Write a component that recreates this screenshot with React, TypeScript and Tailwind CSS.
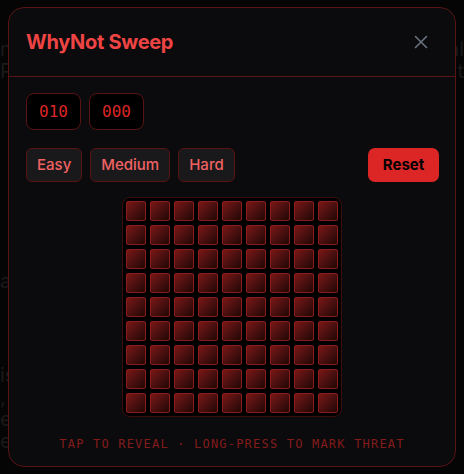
import React from "react";

const cells = Array.from({ length: 81 }, (_, i) => i);

export default function App() {
  return (
    <div className="relative w-[464px] h-[474px] overflow-hidden bg-[#050505]" style={{ fontFamily: "Inter, 'Noto Sans', sans-serif" }}>
      {/* faint page behind */}
      <div className="flex flex-col text-[#1a1a1a] text-[20px] leading-[22px] pt-[38px]">
        <div className="flex justify-between"><span>n</span><span>al</span></div>
        <div className="flex justify-between"><span>P</span><span>t</span></div>
        <div className="h-[188px]" />
        <div>a</div>
        <div className="h-[72px]" />
        <div>is</div>
        <div>,</div>
        <div>e'</div>
        <div>e</div>
        <div className="pl-[120px] text-[13px] leading-[14px]">ch Current &amp; AI-Powered Developm</div>
      </div>

      {/* modal overlay */}
      <div className="absolute left-[8px] top-[7px] w-[448px] h-[460px] rounded-[16px] border border-[#5a1414] bg-[#0b0b0d] flex flex-col">
        <div className="h-[69px] flex items-center justify-between pl-[17px] pr-[27px] border-b border-[#5a1414]">
          <h2 className="text-[20px] font-bold text-[#ef4444] tracking-[-0.3px]">WhyNot Sweep</h2>
          <svg width="14" height="14" viewBox="0 0 14 14" fill="none" stroke="#6b7280" strokeWidth="1.6" strokeLinecap="round">
            <path d="M1.5 1.5 L12.5 12.5 M12.5 1.5 L1.5 12.5" />
          </svg>
        </div>

        <div className="flex flex-col px-[17px] pt-[16px]">
          <div className="flex gap-[8px]">
            {["010", "000"].map((v) => (
              <div key={v} className="w-[55px] h-[37px] rounded-[8px] border border-[#5a1414] bg-black flex items-center justify-center text-[#dc2626] text-[16px]" style={{ fontFamily: "'DejaVu Sans Mono', monospace" }}>
                {v}
              </div>
            ))}
          </div>

          <div className="flex items-center mt-[18px]">
            <div className="flex gap-[8px]">
              {["Easy", "Medium", "Hard"].map((d) => (
                <button key={d} className="h-[34px] px-[10px] rounded-[6px] border border-[#5a1414] bg-[#19191b] text-[#f06262] text-[15px] font-medium">
                  {d}
                </button>
              ))}
            </div>
            <button className="ml-auto mr-[-1px] w-[71px] h-[34px] rounded-[7px] bg-[#dc2626] text-black text-[15px] font-bold">
              Reset
            </button>
          </div>

          <div className="mt-[15px] self-center ml-[-1px] p-[3px] rounded-[8px] border border-[#3b0d0d] bg-black">
            <div className="grid grid-cols-9 gap-[4px]">
              {cells.map((i) => (
                <div key={i} className="w-[20px] h-[20px] rounded-[2px] border border-[#8b1c1c] bg-gradient-to-br from-[#7a1717] to-[#220707]" />
              ))}
            </div>
          </div>

          <div className="mt-[18px] text-center text-[12px] tracking-[1.2px] text-[#841b1b]" style={{ fontFamily: "'DejaVu Sans Mono', monospace" }}>
            TAP TO REVEAL · LONG-PRESS TO MARK THREAT
          </div>
        </div>
      </div>
    </div>
  );
}
